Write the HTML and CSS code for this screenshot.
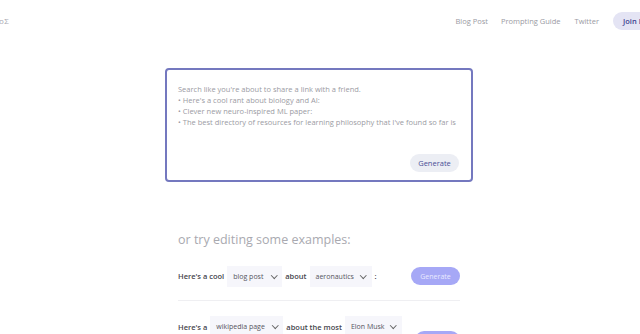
FILE: index.html
```html
<!DOCTYPE html>
<html>
<head>
<meta charset="utf-8">
<link rel="stylesheet" href="styles.css">
</head>
<body>
<header class="nav">
  <div class="logo">oΣ</div>
  <nav class="links">
    <a class="link">Blog Post</a>
    <a class="link">Prompting Guide</a>
    <a class="link">Twitter</a>
    <a class="join">Join Discord</a>
  </nav>
</header>
<main class="main">
  <section class="searchbox">
    <div class="prompt">
      <p>Search like you're about to share a link with a friend.</p>
      <p>• Here's a cool rant about biology and AI:</p>
      <p>• Clever new neuro-inspired ML paper:</p>
      <p>• The best directory of resources for learning philosophy that I've found so far is</p>
    </div>
    <div class="actions"><button class="gen">Generate</button></div>
  </section>
  <section class="examples">
    <h2 class="title">or try editing some examples:</h2>
    <div class="row">
      <div class="sentence">
        <span class="word">Here's a cool</span>
        <span class="select w55">blog post<i class="chev"></i></span>
        <span class="word">about</span>
        <span class="select w62">aeronautics<i class="chev"></i></span>
        <span class="word">:</span>
      </div>
      <button class="gen2">Generate</button>
    </div>
    <div class="row row2">
      <div class="sentence">
        <span class="word">Here's a</span>
        <span class="select w73">wikipedia page<i class="chev"></i></span>
        <span class="word">about the most</span>
        <span class="select w57">Elon Musk<i class="chev"></i></span>
      </div>
      <button class="gen2 low">Generate</button>
    </div>
  </section>
</main>
</body>
</html>
```
FILE: styles.css
```css
html, body { margin: 0; padding: 0; overflow: hidden; background: #fff; }
body { font-family: "Open Sans", "Noto Sans", sans-serif; width: 640px; height: 334px; }
.nav { display: flex; align-items: center; justify-content: space-between; width: 673px; height: 41px; }
.logo { font-size: 8px; color: #a9a9b2; letter-spacing: 0.5px; margin-left: -1px; }
.links { display: flex; align-items: center; }
.link { font-size: 7.5px; color: #9a9aa3; margin-right: 14px; }
.link:first-child { margin-right: 13px; }
.join { font-size: 7.5px; font-weight: 600; color: #3c3f8f; background: #e4e4f4; border-radius: 9px; height: 18px; line-height: 18px; padding: 0 10px; width: 60px; box-sizing: border-box; white-space: nowrap; overflow: hidden; }
.main { margin-left: 165px; width: 308px; padding-top: 27px; }
.searchbox { border: 2px solid #7478bf; border-radius: 4px; height: 114px; box-sizing: border-box; padding: 14px 11px 8px 11px; display: flex; flex-direction: column; justify-content: space-between; }
.prompt p { margin: 0; font-size: 7.5px; line-height: 11px; color: #9b9ba3; white-space: nowrap; }
.actions { display: flex; justify-content: flex-end; padding-right: 1px; }
.gen { font-family: inherit; font-size: 7.5px; color: #4b4f96; background: #eceef4; border: 0; border-radius: 9px; height: 18px; width: 49px; padding: 0; }
.examples { padding: 0 13px; }
.title { font-size: 12.5px; font-weight: 400; color: #a9a9b0; margin: 48px 0 0 0; line-height: 20px; }
.row { display: flex; align-items: center; justify-content: space-between; height: 34px; margin-top: 9px; border-bottom: 1px solid #efeff2; padding-bottom: 7px; }
.row2 { border-bottom: 0; margin-top: 15px; align-items: flex-start; }
.sentence { display: flex; align-items: center; }
.word { font-size: 7.5px; font-weight: 600; color: #45454d; margin-right: 3px; }
.select { position: relative; font-size: 7px; color: #55555d; background: #f6f6fb; height: 21px; line-height: 21px; padding-left: 6px; box-sizing: border-box; margin-right: 3px; }
.w55 { width: 55px; } .w62 { width: 62px; } .w73 { width: 73px; } .w57 { width: 57px; }
.chev { position: absolute; right: 6px; top: 7px; width: 3.5px; height: 3.5px; border-right: 1px solid #666; border-bottom: 1px solid #666; transform: rotate(45deg); }
.gen2 { font-family: inherit; font-size: 7px; color: #e8e8ff; background: #a6a8f6; border: 0; border-radius: 9px; height: 18px; width: 49px; padding: 0; }
.low { margin-top: 15px; width: 45px; margin-right: 0; }
```
